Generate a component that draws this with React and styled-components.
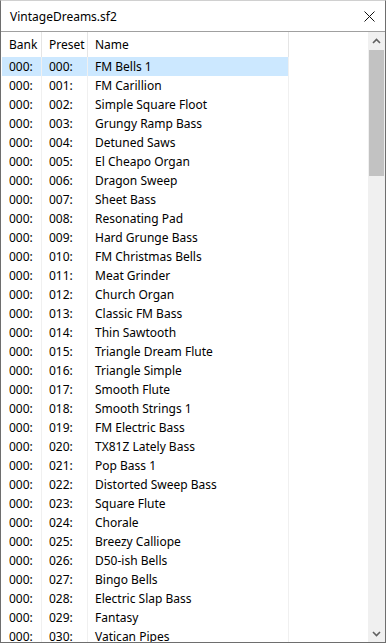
import React from 'react';
import styled, { createGlobalStyle } from 'styled-components';

const GlobalStyle = createGlobalStyle`
  html, body {
    margin: 0;
    padding: 0;
    background: #ffffff;
  }
  body {
    font-family: 'Noto Sans', 'Open Sans', sans-serif;
    font-size: 12px;
    color: #000;
  }
`;

const presets = [
  'FM Bells 1',
  'FM Carillion',
  'Simple Square Floot',
  'Grungy Ramp Bass',
  'Detuned Saws',
  'El Cheapo Organ',
  'Dragon Sweep',
  'Sheet Bass',
  'Resonating Pad',
  'Hard Grunge Bass',
  'FM Christmas Bells',
  'Meat Grinder',
  'Church Organ',
  'Classic FM Bass',
  'Thin Sawtooth',
  'Triangle Dream Flute',
  'Triangle Simple',
  'Smooth Flute',
  'Smooth Strings 1',
  'FM Electric Bass',
  'TX81Z Lately Bass',
  'Pop Bass 1',
  'Distorted Sweep Bass',
  'Square Flute',
  'Chorale',
  'Breezy Calliope',
  'D50-ish Bells',
  'Bingo Bells',
  'Electric Slap Bass',
  'Fantasy',
  'Vatican Pipes',
];

const Window = styled.div`
  width: 386px;
  height: 643px;
  box-sizing: border-box;
  border: 1px solid #6e6e6e;
  border-top-color: #d0d0d0;
  display: flex;
  flex-direction: column;
  overflow: hidden;
`;

const TitleBar = styled.div`
  height: 30px;
  flex: none;
  display: flex;
  align-items: center;
  justify-content: space-between;
  padding: 0 10px 0 9px;
`;

const Title = styled.span`
  font-size: 12px;
`;

const ListFrame = styled.div`
  flex: 1;
  min-height: 0;
  display: flex;
  border-top: 1px solid #a0a0a0;
`;

const ListArea = styled.div`
  flex: 1;
  overflow: hidden;
  padding-left: 1px;
`;

const Grid = styled.div`
  display: grid;
  grid-template-columns: 40px 46px 201px 1fr;
`;

const HeaderCell = styled.div`
  height: 25px;
  display: flex;
  align-items: center;
  padding-left: 7px;
  border-right: ${p => (p.$last ? 'none' : '1px solid #e5e5e5')};
  box-sizing: border-box;
`;

const Cell = styled.div`
  height: 19px;
  display: flex;
  align-items: center;
  padding-left: 7px;
  box-sizing: border-box;
  white-space: nowrap;
  border-right: ${p => (p.$last ? 'none' : '1px solid #f0f0f0')};
  background: ${p => (p.$selected ? '#cce8ff' : 'transparent')};
`;

const ScrollBar = styled.div`
  width: 17px;
  flex: none;
  background: #f0f0f0;
  display: flex;
  flex-direction: column;
`;

const ArrowButton = styled.div`
  height: 17px;
  flex: none;
  display: flex;
  align-items: center;
  justify-content: center;
`;

const Track = styled.div`
  flex: 1;
  display: flex;
  flex-direction: column;
  padding: 1px 1px 0;
`;

const Thumb = styled.div`
  height: 126px;
  background: #c2c2c2;
`;

const Chevron = ({ up }) => (
  <svg width="9" height="6" viewBox="0 0 9 6">
    <polyline
      points={up ? '1,5 4.5,1.5 8,5' : '1,1 4.5,4.5 8,1'}
      fill="none"
      stroke="#606060"
      strokeWidth="1.6"
    />
  </svg>
);

const CloseIcon = () => (
  <svg width="11" height="11" viewBox="0 0 11 11">
    <path d="M0.5 0.5 L10.5 10.5 M10.5 0.5 L0.5 10.5" stroke="#111" strokeWidth="1" />
  </svg>
);

const pad = n => String(n).padStart(3, '0') + ':';

export default function App() {
  return (
    <>
      <GlobalStyle />
      <Window>
        <TitleBar>
          <Title>VintageDreams.sf2</Title>
          <CloseIcon />
        </TitleBar>
        <ListFrame>
          <ListArea>
            <Grid>
              <HeaderCell>Bank</HeaderCell>
              <HeaderCell>Preset</HeaderCell>
              <HeaderCell>Name</HeaderCell>
              <HeaderCell $last />
              {presets.map((name, i) => (
                <React.Fragment key={i}>
                  <Cell $selected={i === 0}>{pad(0)}</Cell>
                  <Cell $selected={i === 0}>{pad(i)}</Cell>
                  <Cell $selected={i === 0}>{name}</Cell>
                  <Cell $last />
                </React.Fragment>
              ))}
            </Grid>
          </ListArea>
          <ScrollBar>
            <ArrowButton>
              <Chevron up />
            </ArrowButton>
            <Track>
              <Thumb />
            </Track>
            <ArrowButton>
              <Chevron />
            </ArrowButton>
          </ScrollBar>
        </ListFrame>
      </Window>
    </>
  );
}
